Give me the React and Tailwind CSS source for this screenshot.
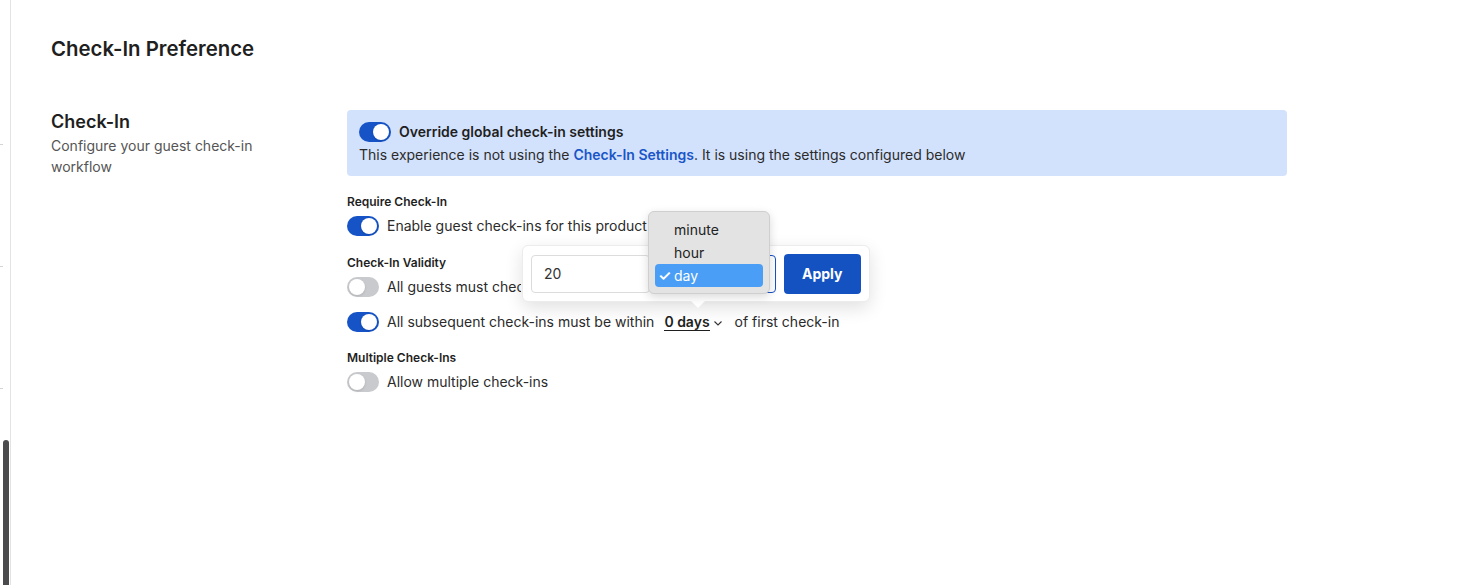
import React from 'react';

const Toggle = ({ on }) => (
  <span
    className={
      'relative inline-flex h-5 w-8 shrink-0 items-center rounded-full ' +
      (on ? 'bg-[#1653c7]' : 'bg-[#c9cacd]')
    }
  >
    <span
      className={
        'absolute top-[2px] h-4 w-4 rounded-full bg-white shadow-sm ' +
        (on ? 'left-[14px]' : 'left-[2px]')
      }
    />
  </span>
);

const Row = ({ on, children }) => (
  <div className="flex h-5 items-center gap-2 text-sm text-[#2b2b2b]">
    <Toggle on={on} />
    <div className="flex items-center">{children}</div>
  </div>
);

const Label = ({ children }) => (
  <div className="mb-1.5 text-xs font-semibold leading-4 text-[#1f1f1f]">{children}</div>
);

export default function App() {
  return (
    <div
      className="flex h-[585px] w-full overflow-hidden bg-white"
      style={{ fontFamily: 'Inter, "Noto Sans", sans-serif' }}
    >
      {/* left rail */}
      <div className="flex w-[11px] shrink-0 flex-col border-r border-[#e3e3e3]">
        <div className="mt-[144px] h-px w-[3px] bg-[#d4d4d4]" />
        <div className="mt-[121px] h-px w-[3px] bg-[#d4d4d4]" />
        <div className="mt-[121px] h-px w-[3px] bg-[#d4d4d4]" />
        <div className="ml-[3px] mt-[51px] w-[6px] flex-1 rounded-t-full bg-[#4b4b4d]" />
      </div>

      <div className="flex-1 pl-[40px] pt-[35px]">
        <h1 className="text-[20.4px] font-semibold leading-7 text-[#1f1f1f]">Check-In Preference</h1>

        <div className="mt-[47px] flex">
          <div className="w-[296px] shrink-0 -mt-[2px]">
            <h2 className="text-lg font-semibold leading-7 text-[#1f1f1f]">Check-In</h2>
            <p className="-mt-px max-w-[220px] text-sm leading-[21px] text-[#555]">
              Configure your guest check-in workflow
            </p>
          </div>

          <div className="relative w-[940px]">
            <div className="rounded bg-[#d3e2fc] px-3 pb-[11px] pt-3">
              <div className="flex items-center gap-2">
                <Toggle on />
                <span className="text-sm font-semibold leading-5 text-[#1f1f1f]">
                  Override global check-in settings
                </span>
              </div>
              <p className="mt-[3px] text-sm leading-5 text-[#2b2b2b]">
                This experience is not using the{' '}
                <span className="font-semibold text-[#1a56c8]">Check-In Settings</span>. It is using
                the settings configured below
              </p>
            </div>

            <div className="mt-[18px]">
              <Label>Require Check-In</Label>
              <Row on>Enable guest check-ins for this product</Row>
            </div>

            <div className="mt-[19px]">
              <Label>Check-In Validity</Label>
              <Row on={false}>
                <span className="block w-[134px] overflow-hidden whitespace-nowrap">
                  All guests must check-in
                </span>
              </Row>
              <div className="mt-[15px]">
                <Row on>
                  <span>All subsequent check-ins must be within</span>
                  <span className="ml-[10px] border-b-[1.5px] border-[#1f1f1f] font-semibold leading-[17px] text-[#1f1f1f]">
                    0 days
                  </span>
                  <svg width="10" height="10" viewBox="0 0 10 10" className="ml-[3px] mt-[2px]">
                    <path d="M1.5 3.5 5 7 8.5 3.5" fill="none" stroke="#333" strokeWidth="1.1" />
                  </svg>
                  <span className="ml-[12px]">of first check-in</span>
                </Row>
              </div>
            </div>

            <div className="mt-[18px]">
              <Label>Multiple Check-Ins</Label>
              <Row on={false}>Allow multiple check-ins</Row>
            </div>

            {/* popover */}
            <div className="absolute left-[175px] top-[135px] flex h-[57px] w-[348px] items-center gap-2 rounded-md border border-[#ececec] bg-white px-2 shadow-[0_6px_18px_rgba(0,0,0,0.12)]">
              <div className="flex h-[38px] w-[120px] items-center rounded border border-[#dcdcdc] px-3 text-sm text-[#333]">
                20
              </div>
              <div className="-ml-2 h-[38px] w-[126px] rounded border border-[#1653c7]" />
              <button className="h-10 w-[78px] rounded bg-[#1452c2] text-sm font-bold text-white">
                Apply
              </button>
              <div className="absolute -bottom-[7px] left-[168px] h-0 w-0 border-x-[7px] border-t-[7px] border-x-transparent border-t-white" />
            </div>

            {/* native select menu */}
            <div className="absolute left-[301px] top-[101px] w-[122px] rounded-md border border-[#cfcfcf] bg-[#e3e3e3] px-[6px] py-[6px] text-sm text-[#222] shadow-[0_3px_10px_rgba(0,0,0,0.15)]">
              <div className="flex h-[23px] items-center pl-[19px]">minute</div>
              <div className="flex h-[23px] items-center pl-[19px]">hour</div>
              <div className="flex h-[23px] items-center rounded bg-[#4a9ef5] pl-[3px] text-white">
                <span className="w-[16px] text-[15px] font-semibold leading-none">✓</span>
                <span>day</span>
              </div>
            </div>
          </div>
        </div>
      </div>
    </div>
  );
}
